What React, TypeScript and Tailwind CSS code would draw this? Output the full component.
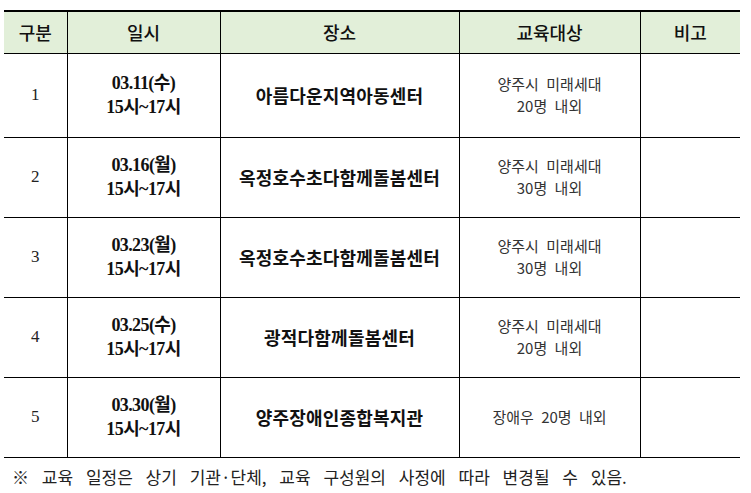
const rows = [
  { no: "1", date: "03.11(수)", place: "아름다운지역아동센터", target: ["양주시 미래세대", "20명 내외"] },
  { no: "2", date: "03.16(월)", place: "옥정호수초다함께돌봄센터", target: ["양주시 미래세대", "30명 내외"] },
  { no: "3", date: "03.23(월)", place: "옥정호수초다함께돌봄센터", target: ["양주시 미래세대", "30명 내외"] },
  { no: "4", date: "03.25(수)", place: "광적다함께돌봄센터", target: ["양주시 미래세대", "20명 내외"] },
  { no: "5", date: "03.30(월)", place: "양주장애인종합복지관", target: ["장애우 20명 내외"] },
];

const sans = "font-['Noto_Sans_CJK_KR',sans-serif]";
const serif = "font-['Liberation_Serif','Noto_Sans_CJK_KR',serif]";

export default function App() {
  return (
    <div className="w-[751px] h-[493px] bg-white pt-[10px] pl-[4px]">
      <table className="w-[736px] border-collapse table-fixed text-[#111]">
        <colgroup>
          <col className="w-[63px]" />
          <col className="w-[153px]" />
          <col className="w-[239px]" />
          <col className="w-[181px]" />
          <col className="w-[100px]" />
        </colgroup>
        <thead>
          <tr className="h-[42px] bg-[#e2efd9] border-t-2 border-black border-b">
            {["구분", "일시", "장소", "교육대상", "비고"].map((h, i) => (
              <th
                key={h}
                className={`${sans} text-[18px] font-medium text-center ${i > 0 ? "border-l border-black" : ""}`}
              >
                {h}
              </th>
            ))}
          </tr>
        </thead>
        <tbody>
          {rows.map((r, idx) => (
            <tr key={r.no} className={`${idx === 0 ? "h-[84px]" : "h-[80px]"} border-b border-black`}>
              <td className={`${serif} text-[17px] text-center text-[#222]`}>{r.no}</td>
              <td className={`${serif} border-l border-black text-center text-[18px] font-bold leading-[24px] tracking-[-0.6px]`}>
                <div>{r.date}</div>
                <div>15시~17시</div>
              </td>
              <td className={`${sans} border-l border-black text-center text-[18px] font-bold tracking-[0.2px]`}>
                {r.place}
              </td>
              <td className={`${sans} border-l border-black text-center text-[15px] leading-[22px] text-[#333] [word-spacing:4px]`}>
                {r.target.map((t) => (
                  <div key={t}>{t}</div>
                ))}
              </td>
              <td className="border-l border-black" />
            </tr>
          ))}
        </tbody>
      </table>
      <p className={`${sans} mt-[6px] pl-[8px] text-[17px] text-[#222] [word-spacing:9px]`}>
        ※ 교육 일정은 상기 기관·단체, 교육 구성원의 사정에 따라 변경될 수 있음.
      </p>
    </div>
  );
}
